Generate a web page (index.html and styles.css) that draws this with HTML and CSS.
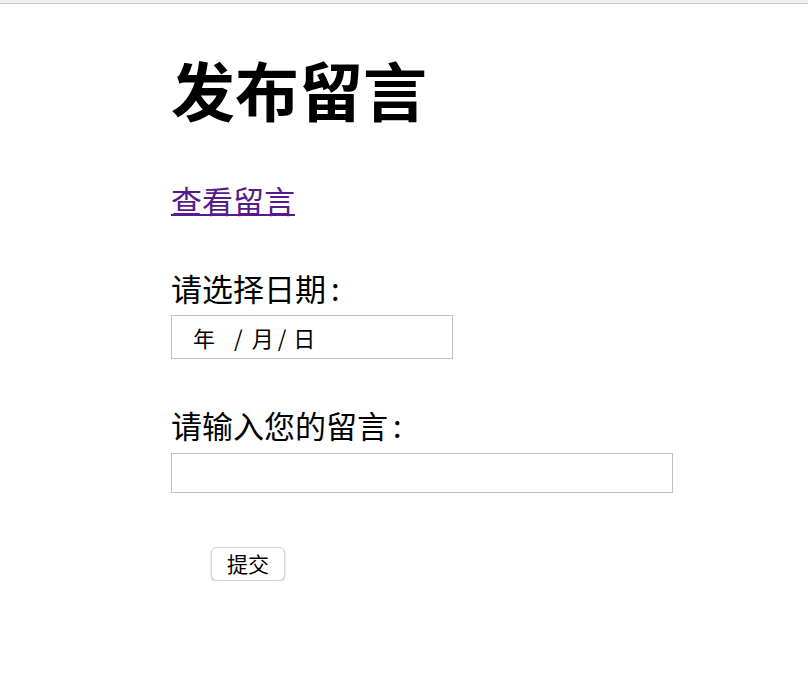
FILE: index.html
```html
<!DOCTYPE html>
<html lang="zh-CN">
<head>
  <meta charset="UTF-8">
  <title>发布留言</title>
  <link rel="stylesheet" href="styles.css">
</head>
<body>

<div class="topbar"></div>

<div class="page">
  <h1>发布留言</h1>

  <p class="nav"><a href="#" class="visited">查看留言</a></p>

  <form id="msgForm">
    <label class="field-label" for="date">请选择日期<span class="colon">:</span></label>
    <div class="date-field" id="date">
      <span class="seg">年</span><span class="sep first">/</span><span class="seg">月</span><span class="sep">/</span><span class="seg">日</span>
    </div>

    <label class="field-label second" for="msg">请输入您的留言<span class="colon">:</span></label>
    <input type="text" id="msg" class="text-field">

    <button type="submit" class="submit">提交</button>
  </form>
</div>

</body>
</html>
```

FILE: styles.css
```css
body {
  margin: 0;
  font-family: "Noto Sans CJK SC", "Noto Sans", sans-serif;
  color: #000;
  background: #fff;
}
.topbar {
  height: 3px;
  background: #f0f0f0;
  border-bottom: 1px solid #c8c8c8;
}
.page {
  margin-left: 171px;
}
h1 {
  margin: 46px 0 0;
  font-size: 64px;
  line-height: 76px;
  font-weight: bold;
}
.nav {
  margin: 54px 0 0;
  font-size: 31px;
  line-height: 40px;
}
.nav a {
  color: #551a8b;
  text-decoration-thickness: 2px;
}
.field-label {
  display: block;
  margin-top: 48px;
  font-size: 31px;
  line-height: 40px;
}
.field-label .colon {
  margin-left: 5px;
}
.field-label.second {
  margin-top: 46px;
}
.date-field {
  box-sizing: border-box;
  width: 282px;
  height: 44px;
  margin-top: 7px;
  padding-left: 21px;
  border: 1px solid #c0c0c0;
  font-size: 22px;
  line-height: 42px;
}
.date-field .sep {
  margin: 0 7px 0 4px;
}
.date-field .sep.first {
  margin: 0 9px 0 19px;
}
.text-field {
  display: block;
  box-sizing: border-box;
  width: 502px;
  height: 40px;
  margin-top: 8px;
  border: 1px solid #c0c0c0;
  padding: 0 6px;
  font-size: 22px;
}
.submit {
  display: block;
  box-sizing: border-box;
  width: 74px;
  height: 34px;
  margin: 54px 0 0 40px;
  background: #fff;
  border: 1px solid #d4d4d4;
  border-radius: 6px;
  box-shadow: 0 1px 2px rgba(0, 0, 0, 0.25);
  font-family: "Noto Sans CJK SC", sans-serif;
  font-size: 21px;
  line-height: 28px;
  padding: 0 0 2px;
}
```
